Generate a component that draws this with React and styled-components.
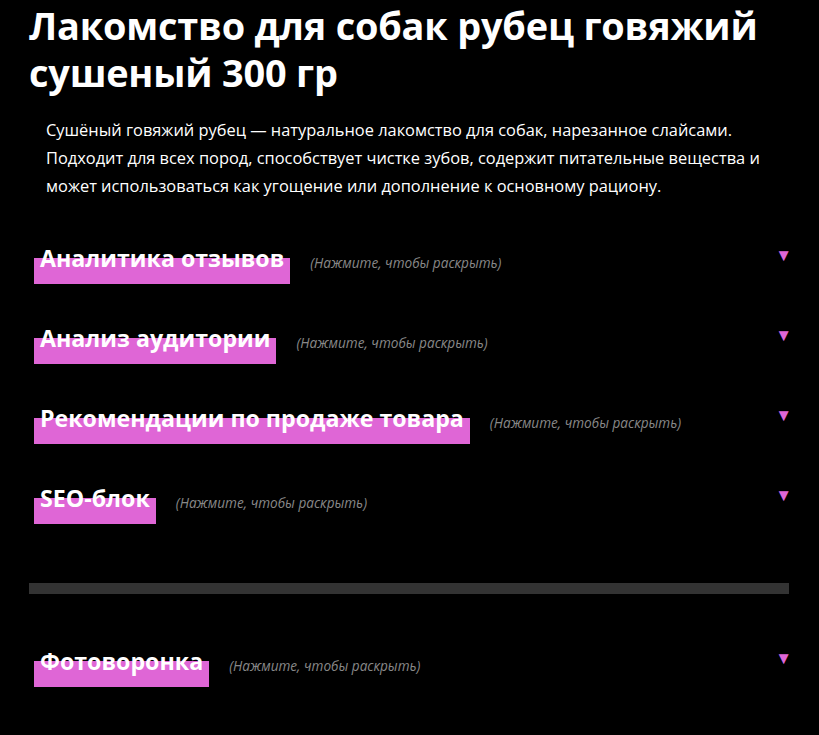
import styled, { createGlobalStyle } from 'styled-components'

const GlobalStyle = createGlobalStyle`
	html, body {
		margin: 0;
		padding: 0;
		background: #000;
	}
	body {
		font-family: 'Open Sans', 'Noto Sans', sans-serif;
		color: #fff;
	}
`

const Page = styled.div`
	padding: 0 30px 40px 29px;
	background: #000;
	min-height: 735px;
	box-sizing: border-box;
`

const Title = styled.h1`
	margin: 0;
	padding-top: 2px;
	font-size: 37.9px;
	line-height: 47px;
	font-weight: 700;
	letter-spacing: -0.2px;
`

const Description = styled.p`
	margin: 20px 0 0;
	padding: 0 20px 0 17px;
	font-size: 16.4px;
	line-height: 28px;
`

const Section = styled.div`
	display: flex;
	flex-direction: column;
	gap: 37px;
	margin-top: ${({ $top }) => $top}px;
`

const Row = styled.div`
	display: flex;
	align-items: center;
	cursor: pointer;
`

const Heading = styled.h2`
	margin: 0 0 0 5px;
	padding: 0 6px 9px;
	font-size: 23.2px;
	line-height: 34px;
	font-weight: 700;
	white-space: nowrap;
	background: linear-gradient(to bottom, transparent 17px, #df66d6 17px);
`

const Hint = styled.span`
	margin-left: 20px;
	font-size: 13.6px;
	font-style: italic;
	color: #888;
`

const Arrow = styled.span`
	margin-left: auto;
	margin-right: -3px;
	align-self: flex-start;
	margin-top: 4px;
	font-size: 17px;
	line-height: 20px;
	color: #df66d6;
`

const Divider = styled.hr`
	margin: 59px 0 0;
	height: 11px;
	border: 0;
	background: #333;
`

const sections = [
	'Аналитика отзывов',
	'Анализ аудитории',
	'Рекомендации по продаже товара',
	'SEO-блок',
]

const Accordion = ({ title }) => (
	<Row>
		<Heading>{title}</Heading>
		<Hint>(Нажмите, чтобы раскрыть)</Hint>
		<Arrow>▼</Arrow>
	</Row>
)

export default function App() {
	return (
		<Page>
			<GlobalStyle />
			<Title>Лакомство для собак рубец говяжий сушеный 300 гр</Title>
			<Description>
				Сушёный говяжий рубец — натуральное лакомство для собак, нарезанное
				слайсами. Подходит для всех пород, способствует чистке зубов, содержит
				питательные вещества и может использоваться как угощение или дополнение
				к основному рациону.
			</Description>
			<Section $top={41}>
				{sections.map((title) => (
					<Accordion key={title} title={title} />
				))}
			</Section>
			<Divider />
			<Section $top={50}>
				<Accordion title="Фотоворонка" />
			</Section>
		</Page>
	)
}
